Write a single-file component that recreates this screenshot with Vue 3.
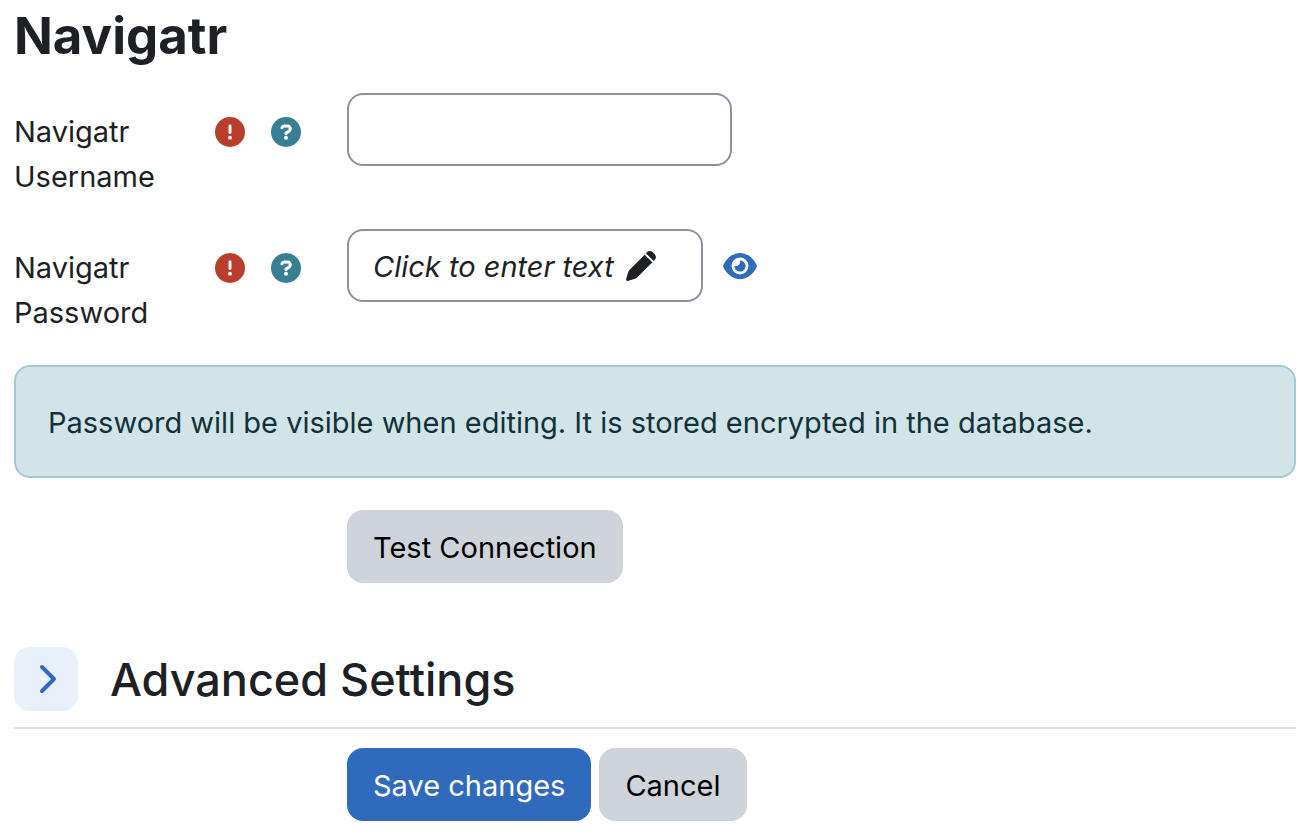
<template>
  <main class="settings">
    <h1>Navigatr</h1>
    <form @submit.prevent>
      <div class="form-row">
        <div class="label-col">
          <label for="username">Navigatr Username</label>
          <div class="label-icons">
            <span class="status" role="img" aria-label="Required">
              <svg viewBox="0 0 512 512"><circle cx="256" cy="256" r="256" fill="#b93f2c" /><path d="M256 152v112" fill="none" stroke="#fff" stroke-width="50" stroke-linecap="round" /><circle cx="256" cy="352" r="33" fill="#fff" /></svg>
            </span>
            <button type="button" class="help" aria-label="Help with Navigatr Username">
              <svg viewBox="0 0 512 512"><circle cx="256" cy="256" r="256" fill="#387f94" /><path d="M188 183c6-18 20-30 39-30h54c28 0 48 23 48 49 0 18-10 34-26 43l-47 29v12" fill="none" stroke="#fff" stroke-width="52" stroke-linecap="round" stroke-linejoin="round" /><circle cx="256" cy="354" r="34" fill="#fff" /></svg>
            </button>
          </div>
        </div>
        <input id="username" v-model="username" class="text-input" type="text" />
      </div>

      <div class="form-row">
        <div class="label-col">
          <label for="password">Navigatr Password</label>
          <div class="label-icons">
            <span class="status" role="img" aria-label="Required">
              <svg viewBox="0 0 512 512"><circle cx="256" cy="256" r="256" fill="#b93f2c" /><path d="M256 152v112" fill="none" stroke="#fff" stroke-width="50" stroke-linecap="round" /><circle cx="256" cy="352" r="33" fill="#fff" /></svg>
            </span>
            <button type="button" class="help" aria-label="Help with Navigatr Password">
              <svg viewBox="0 0 512 512"><circle cx="256" cy="256" r="256" fill="#387f94" /><path d="M188 183c6-18 20-30 39-30h54c28 0 48 23 48 49 0 18-10 34-26 43l-47 29v12" fill="none" stroke="#fff" stroke-width="52" stroke-linecap="round" stroke-linejoin="round" /><circle cx="256" cy="354" r="34" fill="#fff" /></svg>
            </button>
          </div>
        </div>
        <div class="password-field">
          <button id="password" type="button" class="password-edit">
            <em>Click to enter text</em>
            <svg viewBox="0 0 512 512"><path fill="currentColor" d="M340 40l18-18c28-28 72-28 100 0l32 32c28 28 28 72 0 100l-18 18zM318 62L58.600 323.500c-10.400 10.400-18 23.300-22.200 37.400L1 481.200C-1.500 489.700 .8 498.800 7 505s15.300 8.500 23.700 6.100l120.300-35.400c14.100-4.200 27-11.800 37.400-22.200L450 194z" /></svg>
          </button>
          <button type="button" class="reveal" aria-label="Reveal password">
            <svg viewBox="0 0 576 512"><path fill="currentColor" d="M288 32c-80.800 0-145.500 36.800-192.600 80.600C48.600 156 17.300 208 2.500 243.700c-3.300 7.900-3.300 16.700 0 24.600C17.300 304 48.600 356 95.400 399.400C142.500 443.200 207.200 480 288 480s145.500-36.800 192.600-80.600c46.800-43.500 78.100-95.400 93-131.100c3.300-7.900 3.300-16.700 0-24.600c-14.900-35.700-46.200-87.700-93-131.100C433.500 68.800 368.800 32 288 32zM144 256a144 144 0 1 1 288 0 144 144 0 1 1-288 0zm144-64c0 35.300-28.700 64-64 64c-7.100 0-13.900-1.200-20.300-3.300c-5.500-1.800-11.900 1.600-11.700 7.400c.3 6.900 1.300 13.800 3.200 20.700c13.700 51.200 66.400 81.600 117.600 67.900s81.600-66.400 67.900-117.600c-11.100-41.500-47.800-69.400-88.600-71.100c-5.800-.2-9.200 6.100-7.400 11.700c2.100 6.400 3.300 13.200 3.300 20.300z" /></svg>
          </button>
        </div>
      </div>

      <div class="alert">Password will be visible when editing. It is stored encrypted in the database.</div>

      <div class="form-row actions">
        <button type="button" class="btn">Test Connection</button>
      </div>

      <div class="section-header">
        <button type="button" class="toggle" aria-label="Expand Advanced Settings" :aria-expanded="expanded" @click="expanded = !expanded">
          <svg viewBox="0 0 32 32"><path d="M12 4l12 12-12 12" fill="none" stroke="currentColor" stroke-width="4" stroke-linecap="round" stroke-linejoin="round" /></svg>
        </button>
        <h2>Advanced Settings</h2>
      </div>

      <div class="form-row actions submit">
        <button type="submit" class="btn primary">Save changes</button>
        <button type="button" class="btn">Cancel</button>
      </div>
    </form>
  </main>
</template>

<script setup>
import { ref } from 'vue'

const username = ref('')
const expanded = ref(false)
</script>

<style>
body {
  margin: 0;
  background: #fff;
}
</style>

<style scoped>
.settings {
  padding: 6px 12px 12px 14px;
  color: #1d2125;
  font-family: Inter, 'Liberation Sans', sans-serif;
  font-size: 29px;
  line-height: 45px;
}

h1,
h2 {
  margin: 0;
}

h1 {
  font-size: 51px;
  font-weight: 700;
  line-height: 60px;
}

button,
input {
  box-sizing: border-box;
  font: inherit;
}

button {
  padding: 0;
  border: 0;
  background: none;
  color: inherit;
  cursor: pointer;
}

svg {
  display: block;
}

.form-row {
  display: grid;
  grid-template-columns: 287px 1fr;
  column-gap: 46px;
  align-items: start;
  margin-top: 27px;
}

.form-row + .form-row {
  margin-top: 30px;
}

.label-col {
  display: flex;
  justify-content: space-between;
  padding-top: 16px;
}

.label-col label {
  width: 160px;
}

.label-icons {
  display: flex;
  gap: 26px;
  padding-top: 8px;
  height: 30px;
}

.label-icons svg {
  width: 30px;
  height: 30px;
}

.text-input {
  width: 385px;
  height: 73px;
  padding: 0 24px;
  border: 2px solid #8f919e;
  border-radius: 16px;
}

.password-field {
  display: flex;
  align-items: center;
  gap: 20px;
}

.password-edit {
  display: flex;
  align-items: center;
  gap: 12px;
  width: 356px;
  height: 73px;
  padding: 0 24px;
  border: 2px solid #8f919e;
  border-radius: 16px;
}

.password-edit em {
  padding-top: 2px;
}

.password-edit svg {
  width: 30px;
  height: 30px;
}

.reveal {
  color: #306abd;
}

.reveal svg {
  width: 34px;
  height: 30px;
}

.alert {
  margin-top: 30px;
  padding: 33px 32px 31px;
  border: 2px solid #a4c9d3;
  border-radius: 16px;
  background: #d1e4e8;
  color: #12313a;
}

.actions {
  display: flex;
  gap: 8px;
  margin-top: 32px;
  padding-left: 333px;
}

.btn {
  height: 73px;
  padding: 2px 26px 0;
  border-radius: 16px;
  background: #ced4da;
  color: #000;
}

.primary {
  background: #306abd;
  color: #fff;
}

.section-header {
  display: flex;
  align-items: center;
  gap: 32px;
  margin-top: 64px;
  padding-bottom: 16px;
  border-bottom: 2px solid #dee2e6;
}

.toggle {
  display: grid;
  place-items: center;
  width: 64px;
  height: 64px;
  border-radius: 16px;
  background: #e8f0f9;
  color: #306abd;
}

.toggle svg {
  width: 32px;
  height: 32px;
}

h2 {
  padding-top: 2px;
  font-size: 45px;
  font-weight: 500;
  line-height: 60px;
}

.submit {
  margin-top: 19px;
}
</style>
